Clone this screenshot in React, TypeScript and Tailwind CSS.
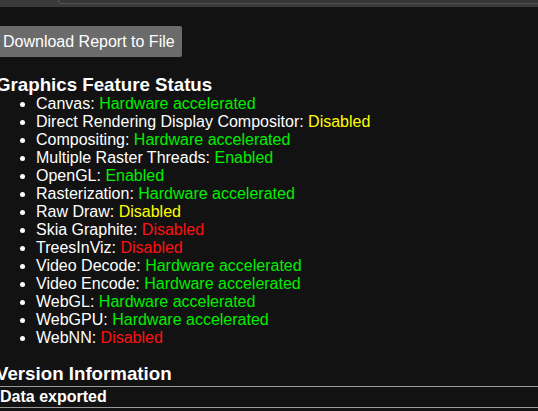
import React from "react";

type Item = { label: string; value: string; color: "g" | "y" | "r" };

const items: Item[] = [
  { label: "Canvas", value: "Hardware accelerated", color: "g" },
  { label: "Direct Rendering Display Compositor", value: "Disabled", color: "y" },
  { label: "Compositing", value: "Hardware accelerated", color: "g" },
  { label: "Multiple Raster Threads", value: "Enabled", color: "g" },
  { label: "OpenGL", value: "Enabled", color: "g" },
  { label: "Rasterization", value: "Hardware accelerated", color: "g" },
  { label: "Raw Draw", value: "Disabled", color: "y" },
  { label: "Skia Graphite", value: "Disabled", color: "r" },
  { label: "TreesInViz", value: "Disabled", color: "r" },
  { label: "Video Decode", value: "Hardware accelerated", color: "g" },
  { label: "Video Encode", value: "Hardware accelerated", color: "g" },
  { label: "WebGL", value: "Hardware accelerated", color: "g" },
  { label: "WebGPU", value: "Hardware accelerated", color: "g" },
  { label: "WebNN", value: "Disabled", color: "r" },
];

const colorClass: Record<Item["color"], string> = {
  g: "text-[#00ee00]",
  y: "text-[#ffff00]",
  r: "text-[#ff1010]",
};

export default function App() {
  return (
    <div
      className="w-[538px] h-[411px] overflow-hidden bg-[#121212] text-white"
      style={{ fontFamily: '"Liberation Sans", Arial, sans-serif' }}
    >
      <div className="flex h-[7px] bg-[#3a3a3a]">
        <div className="w-[58px] shrink-0" />
        <div className="flex-1 h-[4px] bg-[#363636] border-b border-l border-[#545454] rounded-bl-[8px]" />
      </div>
      <div className="ml-[-4px]">
        <button className="mt-[19px] h-[31px] px-[7px] bg-[#6b6b6b] text-white text-[16px] leading-[18px] rounded-[2px]">
          Download Report to File
        </button>
        <h3 className="mt-[18px] text-[18.72px] leading-[20px] font-bold">
          Graphics Feature Status
        </h3>
        <ul className="list-disc pl-[40px] text-[16px] leading-[18px]">
          {items.map((it) => (
            <li key={it.label}>
              <span>{it.label}: </span>
              <span className={colorClass[it.color]}>{it.value}</span>
            </li>
          ))}
        </ul>
        <h3 className="mt-[17px] text-[18.72px] leading-[20px] font-bold">
          Version Information
        </h3>
      </div>
      <div className="mt-[2px] border-t border-b border-[#9a9a9a] h-[22px] pt-[1px] text-[16px] leading-[18px] font-bold">
        Data exported
      </div>
    </div>
  );
}
